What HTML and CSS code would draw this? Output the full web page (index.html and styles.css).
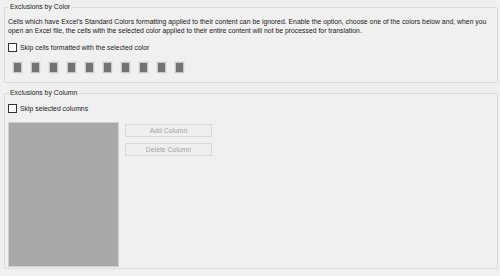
FILE: index.html
```html
<!DOCTYPE html>
<html lang="en">
<head>
  <meta charset="UTF-8">
  <title>Exclusions</title>
  <link rel="stylesheet" href="styles.css">
</head>
<body>

<fieldset class="group color-group">
  <legend>Exclusions by Color</legend>
  <p class="desc">Cells which have Excel's Standard Colors formatting applied to their content can be ignored. Enable the option, choose one of the colors below and, when you open an Excel file, the cells with the selected color applied to their entire content will not be processed for translation.</p>
  <label class="check"><span class="box"></span>Skip cells formatted with the selected color</label>
  <div class="swatches">
    <span class="swatch"></span>
    <span class="swatch"></span>
    <span class="swatch"></span>
    <span class="swatch"></span>
    <span class="swatch"></span>
    <span class="swatch"></span>
    <span class="swatch"></span>
    <span class="swatch"></span>
    <span class="swatch"></span>
    <span class="swatch"></span>
  </div>
</fieldset>

<fieldset class="group column-group">
  <legend>Exclusions by Column</legend>
  <label class="check"><span class="box"></span>Skip selected columns</label>
  <div class="columns">
    <div class="list"></div>
    <div class="actions">
      <button class="btn" disabled>Add Column</button>
      <button class="btn" disabled>Delete Column</button>
    </div>
  </div>
</fieldset>

</body>
</html>
```

FILE: styles.css
```css
body {
  margin: 0;
  padding: 2px 2px 0 4px;
  background-color: #f0f0f0;
  color: #1a1a1a;
  font-family: "Liberation Sans", Arial, sans-serif;
  font-size: 6.85px;
  line-height: 9px;
}
.group {
  margin: 0;
  border: 1px solid #dcdcdc;
  border-radius: 2px;
  padding: 0 3px 0 3px;
}
.group legend {
  padding: 0 1px;
  margin-left: 1px;
  line-height: 10px;
}
.color-group {
  height: 74px;
  padding-top: 5px;
}
.desc {
  margin: 0 0 8px 0;
}
.check {
  display: flex;
  align-items: center;
  gap: 3px;
}
.box {
  width: 7px;
  height: 7px;
  border: 1px solid #333;
  background: #fff;
}
.swatches {
  display: flex;
  gap: 9px;
  margin: 10px 0 0 5px;
}
.swatch {
  width: 7px;
  height: 9px;
  background: #727272;
  border: 1px solid #c8c8c8;
  box-shadow: 0 0 0 1px #e6e6e6;
}
.column-group {
  margin-top: 5px;
  height: 173px;
  padding-top: 6px;
}
.columns {
  display: flex;
  gap: 6px;
  margin-top: 9px;
}
.list {
  width: 109px;
  height: 143px;
  background: #a9a9a9;
  border: 1px solid #d0d0d0;
}
.actions {
  display: flex;
  flex-direction: column;
  gap: 6px;
  padding-top: 2px;
}
.btn {
  width: 87px;
  height: 13px;
  padding: 0;
  background-color: #efefef;
  border: 1px solid #dadada;
  color: #a3a3a3;
  font-family: "Liberation Sans", Arial, sans-serif;
  font-size: 6.85px;
}
```
